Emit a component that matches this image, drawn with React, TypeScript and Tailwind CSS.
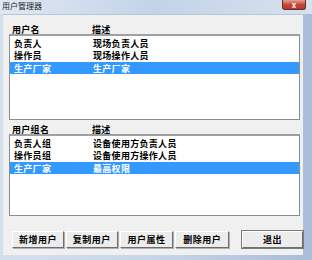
import React from "react";

type Row = { name: string; desc: string; selected?: boolean };

const users: Row[] = [
  { name: "负责人", desc: "现场负责人员" },
  { name: "操作员", desc: "现场操作人员" },
  { name: "生产厂家", desc: "生产厂家", selected: true },
];

const groups: Row[] = [
  { name: "负责人组", desc: "设备使用方负责人员" },
  { name: "操作员组", desc: "设备使用方操作人员" },
  { name: "生产厂家", desc: "最高权限", selected: true },
];

const font = { fontFamily: '"Noto Sans CJK SC", "Noto Sans", sans-serif' };

function ListPanel({ col1, rows, height }: { col1: string; rows: Row[]; height: string }) {
  return (
    <div className="flex flex-col">
      <div className="flex items-end h-[12px] pl-[3px] text-[9px] font-bold tracking-[0.3px] leading-none text-black">
        <span className="w-[80px]">{col1}</span>
        <span>描述</span>
      </div>
      <div className={`${height} w-[291px] bg-white border border-[#8a8c90] border-t-2 border-t-[#a0a0a0] pt-[1px]`}>
        {rows.map((r) => (
          <div
            key={r.name + r.desc}
            className={
              "flex items-center h-[12px] pl-[4px] text-[9px] font-bold tracking-[0.3px] leading-none " +
              (r.selected ? "bg-[#3399ff] text-white mt-[1px]" : "text-black")
            }
          >
            <span className="w-[79px]">{r.name}</span>
            <span>{r.desc}</span>
          </div>
        ))}
      </div>
    </div>
  );
}

function Btn({ label, w }: { label: string; w: string }) {
  return (
    <button
      className={`${w} h-[17px] flex items-center justify-center bg-[#ececec] text-[9px] font-bold tracking-[0.5px] leading-none text-black border border-t-white border-l-white border-r-[#6e6e6e] border-b-[#6e6e6e] shadow-[1px_1px_0_#b0b0b0]`}
    >
      {label}
    </button>
  );
}

export default function App() {
  return (
    <div
      className="w-[312px] h-[260px] flex flex-col bg-gradient-to-r from-[#d4e0ee] via-[#c5d6ea] to-[#a9bdd6] overflow-hidden"
      style={font}
    >
      <div className="h-[14px] flex items-start justify-between bg-gradient-to-r from-[#dfe8f3] via-[#c3d3e8] to-[#d6e1ee]">
        <span className="pl-[2px] pt-[2px] text-[8px] leading-none text-[#1e1e1e]">用户管理器</span>
        <div className="mr-[6px] w-[24px] h-[10px] rounded-b-[3px] bg-gradient-to-b from-[#e0a197] via-[#c7463a] to-[#b03a2e] border border-t-0 border-[#6b2a24] flex items-center justify-center">
          <span className="text-[8px] font-bold leading-none text-white">x</span>
        </div>
      </div>
      <div className="flex-1 ml-[3px] mr-[9px] mb-[5px] bg-[#f0f0f0] border-t border-[#b9c6d6] flex flex-col pt-[7px] pl-[6px]">
        <ListPanel col1="用户名" rows={users} height="h-[86px]" />
        <div className="h-[2px]" />
        <ListPanel col1="用户组名" rows={groups} height="h-[82px]" />
        <div className="flex items-center mt-[15px] pl-[3px] gap-[2px]">
          <Btn label="新增用户" w="w-[52px]" />
          <Btn label="复制用户" w="w-[52px]" />
          <Btn label="用户属性" w="w-[54px]" />
          <Btn label="删除用户" w="w-[54px]" />
          <div className="w-[9px]" />
          <button className="w-[61px] h-[17px] flex items-center justify-center bg-[#ececec] text-[9px] font-bold tracking-[0.5px] leading-none text-black border border-t-white border-l-white border-r-[#6e6e6e] border-b-[#6e6e6e] outline outline-1 outline-[#7a7a7a]">
            退出
          </button>
        </div>
      </div>
    </div>
  );
}
